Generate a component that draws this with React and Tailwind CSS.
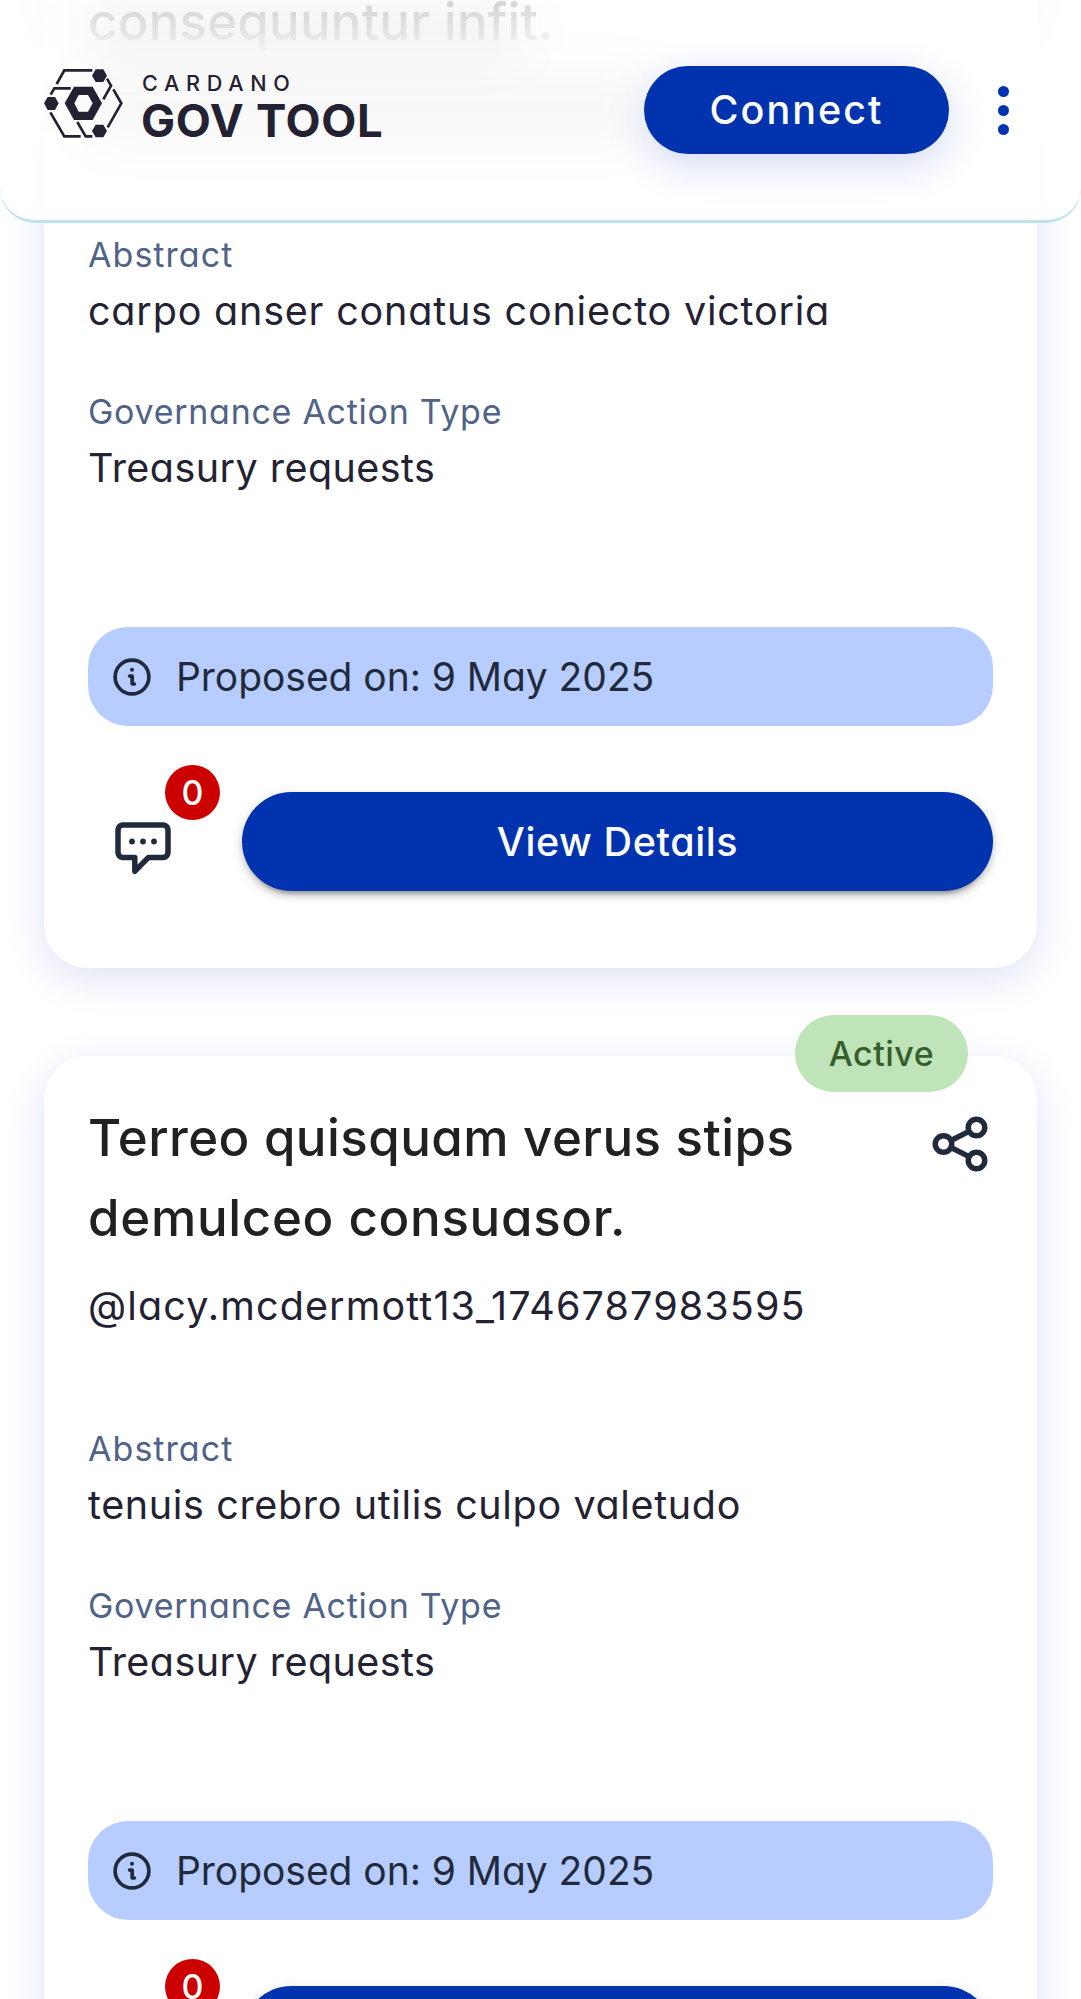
const PROPOSALS = [
  {
    title: [{ text: "consequuntur infit.", tracking: "tracking-[0.2px]" }],
    titleOffset: "pt-[79px]",
    author: null,
    status: null,
    abstract: "carpo anser conatus coniecto victoria",
    abstractTracking: "tracking-[0.8px]",
    comments: 0,
  },
  {
    title: [
      { text: "Terreo quisquam verus stips", tracking: "tracking-[0.45px]" },
      { text: "demulceo consuasor.", tracking: "tracking-[0.7px]" },
    ],
    titleOffset: "pt-px",
    author: "@lacy.mcdermott13_1746787983595",
    status: "Active",
    abstract: "tenuis crebro utilis culpo valetudo",
    abstractTracking: "tracking-[0.64px]",
    comments: 0,
  },
];

function LogoMark() {
  return (
    <svg viewBox="0 0 270 252" className="h-[84px] w-[90px] shrink-0" fill="none">
      <path
        fill="#242232"
        fillRule="evenodd"
        d="M74 130 102 80H158L186 130 158 180H102ZM103 130 116 155H144L158 130 144 105H116Z"
      />
      <path
        fill="#242232"
        d="M156 47 167 28H190L201 47 190 66H167ZM12 130 23 111H45L56 130 45 150H23ZM156 213 167 194H190L201 213 190 232H167Z"
      />
      <path
        stroke="#242232"
        strokeWidth="8"
        d="M50 72 73 31H157M32 104 43 85H92M201 56 213 77 190 118M220 88 244 130 203 202M31 157 73 229H122M112 186 137 229H157"
      />
    </svg>
  );
}

function InfoIcon() {
  return (
    <svg viewBox="0 0 24 24" className="size-11 shrink-0" fill="none" stroke="#212A3D" strokeLinecap="round" strokeLinejoin="round">
      <circle cx="12" cy="12" r="9.2" strokeWidth="2" />
      <circle cx="12" cy="8" r="1.1" fill="#212A3D" stroke="none" />
      <path d="M10.7 11.5h1.4v4.3h1.2" strokeWidth="2" />
    </svg>
  );
}

function CommentIcon() {
  return (
    <svg viewBox="0 0 66 66" className="size-[66px]" fill="none">
      <path
        d="M12.5 8.9h41a5 5 0 0 1 4.5 5v22.7a5 5 0 0 1-4.5 5H38.2L24.8 55.3V41.6H12.5a5 5 0 0 1-4.5-5V13.9a5 5 0 0 1 4.5-5Z"
        stroke="#212A3D"
        strokeWidth="5.5"
        strokeLinejoin="round"
      />
      <g fill="#212A3D">
        <circle cx="22" cy="25.5" r="2.9" />
        <circle cx="33" cy="25.5" r="2.9" />
        <circle cx="44" cy="25.5" r="2.9" />
      </g>
    </svg>
  );
}

function ShareIcon() {
  return (
    <svg viewBox="0 0 24 24" className="size-[66px]" fill="none" stroke="#212A3D" strokeWidth="2">
      <circle cx="18" cy="6" r="3" />
      <circle cx="6" cy="12" r="3" />
      <circle cx="18" cy="18" r="3" />
      <path d="m8.7 10.7 6.6-3.3M8.7 13.3l6.6 3.3" />
    </svg>
  );
}

function Header() {
  return (
    <header className="absolute inset-x-0 top-0 z-10 flex h-[223px] items-start justify-between overflow-hidden rounded-b-[35px] border-b-3 border-[#BFE3EB] bg-linear-to-b from-white/83 via-white/98 via-24% to-white/94">
      <div className="absolute top-[2px] left-[90px] h-[50px] w-[430px] bg-black/5 blur-[26px]" />
      <div className="absolute top-[78px] left-[90px] h-[56px] w-[560px] bg-black/4 blur-[30px]" />
      <div className="relative flex pl-10">
        <div className="pt-[60px]">
          <LogoMark />
        </div>
        <div className="flex flex-col gap-[3.5px] pt-[72px] pl-[11px] text-[#242232]">
          <span className="pl-px text-[21.6px] leading-[22px] font-medium tracking-[6.7px]">CARDANO</span>
          <span className="text-[45.5px] leading-[46px] font-bold tracking-[0.7px] whitespace-nowrap">GOV TOOL</span>
        </div>
      </div>
      <div className="relative flex items-center pt-[66px] pr-[72px]">
        <button className="h-[88px] w-[305px] rounded-full bg-[#0033AD] pt-[2px] text-[39.5px] font-medium tracking-[2px] text-white shadow-[0_11px_41px_#D3DAF2]">
          Connect
        </button>
        <button className="ml-[49px] flex flex-col gap-[8px]" aria-label="Menu">
          <span className="size-[11px] rounded-full bg-[#0033AD]" />
          <span className="size-[11px] rounded-full bg-[#0033AD]" />
          <span className="size-[11px] rounded-full bg-[#0033AD]" />
        </button>
      </div>
    </header>
  );
}

function Field({ label, labelTracking, value, valueTracking }) {
  return (
    <div>
      <p className={`text-[34px] leading-[44px] text-[#506288] ${labelTracking}`}>{label}</p>
      <p className={`pt-px text-[39.5px] leading-[66px] whitespace-nowrap text-[#242232] ${valueTracking}`}>{value}</p>
    </div>
  );
}

function ProposalCard({ proposal }) {
  return (
    <article className="relative h-[1106px] shrink-0 rounded-[44px] bg-white px-11 pt-[41px] shadow-[0_11px_41px_#DDE3F5]">
      {proposal.status && (
        <span className="absolute -top-[41px] right-[69px] flex h-[77px] w-[173px] items-center justify-center rounded-full bg-[#C0E4BA] text-[34px] font-medium tracking-[0.5px] text-[#365F2D]">
          {proposal.status}
        </span>
      )}
      <div className="flex h-[160px] items-start justify-between">
        <h3 className={`text-[51px] leading-[79.5px] font-medium whitespace-nowrap text-[#212121] ${proposal.titleOffset}`}>
          {proposal.title.map((line) => (
            <span key={line.text} className={`block ${line.tracking}`}>
              {line.text}
            </span>
          ))}
        </h3>
        <button className="mt-[14px]" aria-label="Share">
          <ShareIcon />
        </button>
      </div>
      <p className="mt-4 h-[66px] text-[39.5px] leading-[66px] tracking-[1.12px] text-[#242232]">{proposal.author}</p>
      <div className="mt-[88px] flex flex-col gap-[46px]">
        <Field label="Abstract" labelTracking="tracking-[1.05px]" value={proposal.abstract} valueTracking={proposal.abstractTracking} />
        <Field label="Governance Action Type" labelTracking="tracking-[0.72px]" value="Treasury requests" valueTracking="tracking-[0.45px]" />
      </div>
      <div className="mt-[126px] flex h-[99px] items-center gap-[22px] rounded-[40px] bg-[#B8CDFF] px-[22px]">
        <InfoIcon />
        <span className="pt-px text-[39px] tracking-[-0.05px] text-[#212A3D]">Proposed on: 9 May 2025</span>
      </div>
      <div className="mt-[66px] flex items-start gap-11">
        <div className="relative w-[110px] shrink-0 px-[22px] pt-[24px]">
          <CommentIcon />
          <span className="absolute -top-[27px] left-[77px] flex size-[55px] items-center justify-center rounded-full bg-[#CC0000] text-[34px] font-medium text-white">
            {proposal.comments}
          </span>
        </div>
        <button className="h-[99px] grow rounded-full bg-[#0033AD] pt-[2px] text-[39.5px] font-medium tracking-[0.6px] text-white shadow-[0_8px_3px_-5px_rgba(0,0,0,0.2),0_5px_6px_rgba(0,0,0,0.14),0_3px_14px_rgba(0,0,0,0.12)]">
          View Details
        </button>
      </div>
    </article>
  );
}

export default function App() {
  return (
    <div className="relative h-[1999px] w-full overflow-hidden bg-white font-['Inter',sans-serif] [font-feature-settings:'cv11']">
      <Header />
      <main className="-mt-[138px] flex flex-col gap-[88px] px-11">
        {PROPOSALS.map((proposal) => (
          <ProposalCard key={proposal.abstract} proposal={proposal} />
        ))}
      </main>
    </div>
  );
}
